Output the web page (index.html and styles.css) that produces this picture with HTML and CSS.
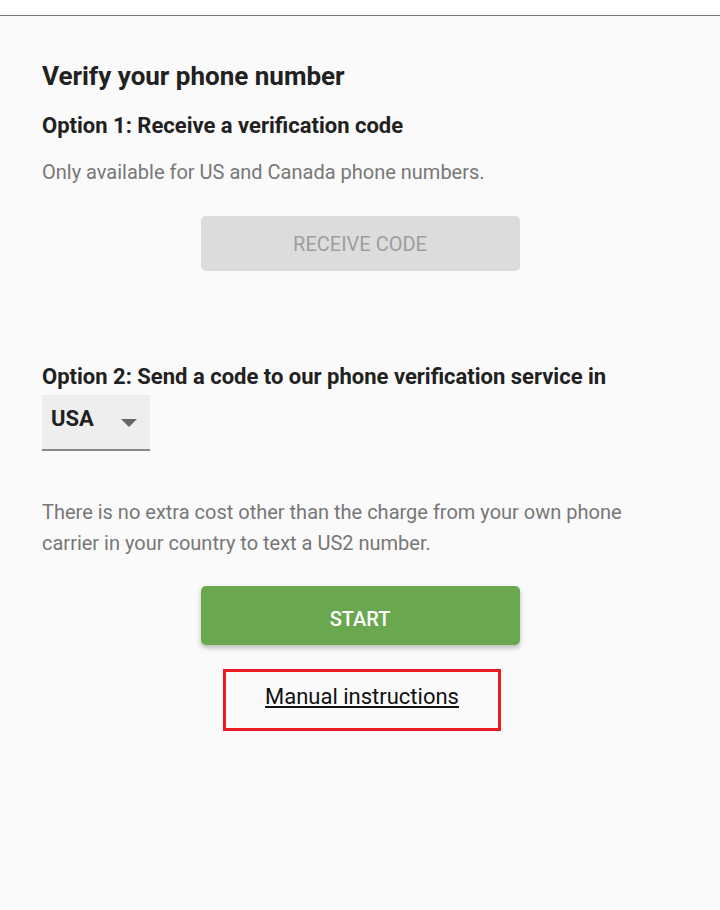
FILE: index.html
```html
<!doctype html>
<html>
<head>
<meta charset='UTF-8'>
<meta name='viewport' content='width=device-width, initial-scale=1'>
<title>Verify your phone number</title>
<link rel="stylesheet" href="styles.css">
</head>
<body>
<div class='top-bar'></div>
<div class='page'>
<h1>Verify your phone number</h1>
<h2>Option 1: Receive a verification code</h2>
<p class='note'>Only available for US and Canada phone numbers.</p>
<div class='button-row'><button class='action disabled' disabled>Receive code</button></div>

<h2 class='option-two'>Option 2: Send a code to our phone verification service in</h2>
<div class='country-select'><span class='country'>USA</span><span class='arrow'></span></div>

<p class='note cost'>There is no extra cost other than the charge from your own phone carrier in your country to text a US2 number.</p>
<div class='button-row'><button class='action start'>Start</button></div>
<div class='button-row'><div class='manual-box'><a href='#' class='manual'>Manual instructions</a></div></div>
</div>
</body>
</html>
```
FILE: styles.css
```css
html, body
{
margin: 0;
height: 100%;
}

body
{
font-family: Roboto, "Noto Sans", sans-serif;
background-color: #fafafa;
color: #212121;
}

.top-bar
{
height: 15px;
background-color: #fff;
border-bottom: 1px solid #777;
}

.page
{
padding: 44px 42px 0 42px;
}

h1
{
font-size: 26px;
font-weight: 700;
margin: 0;
line-height: 32px;
}

h2
{
font-size: 22px;
font-weight: 700;
margin: 20px 0 0 0;
line-height: 28px;
}

.note
{
font-size: 20px;
color: #777;
line-height: 31px;
margin: 17px 0 0 0;
}

.button-row
{
display: flex;
justify-content: center;
}

button.action
{
font-family: inherit;
font-size: 20px;
text-transform: uppercase;
width: 319px;
border: none;
border-radius: 5px;
}

button.disabled
{
height: 55px;
margin-top: 28px;
background-color: #dcdcdc;
color: #9e9e9e;
}

.option-two
{
margin-top: 92px;
}

.country-select
{
display: flex;
align-items: center;
justify-content: space-between;
width: 108px;
height: 56px;
margin-top: 4px;
box-sizing: border-box;
padding: 0 13px 8px 9px;
background-color: #eee;
border-bottom: 2px solid #888;
}

.country
{
font-size: 22px;
font-weight: 700;
}

.arrow
{
margin-top: 10px;
border-left: 8px solid transparent;
border-right: 8px solid transparent;
border-top: 8px solid #666;
}

.cost
{
margin-top: 46px;
}

button.start
{
height: 59px;
margin-top: 27px;
padding-top: 8px;
background-color: #6aa84f;
color: #fff;
font-weight: 500;
box-shadow: 0 3px 5px rgba(0,0,0,0.25);
}

.manual-box
{
margin-top: 24px;
margin-left: 4px;
width: 278px;
height: 62px;
box-sizing: border-box;
padding-bottom: 8px;
border: 3px solid #ed1c24;
display: flex;
align-items: center;
justify-content: center;
}

.manual
{
font-size: 22px;
color: #111;
text-decoration: underline;
}
```
